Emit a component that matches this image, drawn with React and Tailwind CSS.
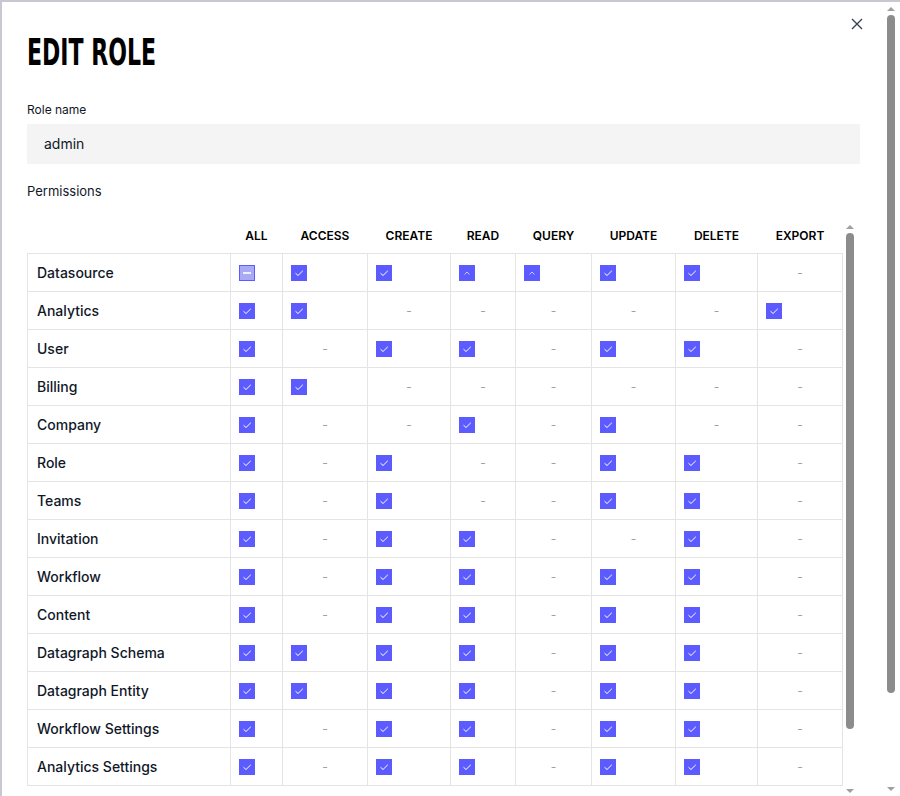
import React from "react";

const cols = ["ALL", "ACCESS", "CREATE", "READ", "QUERY", "UPDATE", "DELETE", "EXPORT"];
const widths = ["w-[203px]", "w-[52px]", "w-[85px]", "w-[83px]", "w-[65px]", "w-[76px]", "w-[84px]", "w-[82px]", "w-[85px]"];

// c = checked, - = none, i = indeterminate, u = partial (caret)
const rows = [
  ["Datasource", "iccuucc-"],
  ["Analytics", "cc-----c"],
  ["User", "c-cc-cc-"],
  ["Billing", "cc------"],
  ["Company", "c--c-c--"],
  ["Role", "c-c--cc-"],
  ["Teams", "c-c--cc-"],
  ["Invitation", "c-cc--c-"],
  ["Workflow", "c-cc-cc-"],
  ["Content", "c-cc-cc-"],
  ["Datagraph Schema", "cccc-cc-"],
  ["Datagraph Entity", "cccc-cc-"],
  ["Workflow Settings", "c-cc-cc-"],
  ["Analytics Settings", "c-cc-cc-"],
];

const Box = ({ t }) => {
  if (t === "-") return <span className="block text-center text-gray-400 text-xs">-</span>;
  if (t === "i")
    return (
      <span className="flex h-4 w-4 items-center justify-center border border-[#5b5bff] bg-[#a9a9f5]">
        <span className="h-[2px] w-2 bg-white/80" />
      </span>
    );
  return (
    <span className="flex h-4 w-4 items-center justify-center bg-[#5b5bff]">
      {t === "u" ? (
        <svg width="10" height="10" viewBox="0 0 10 10" fill="none" stroke="#c9c9ff" strokeWidth="1">
          <path d="M2.5 6.5 5 4l2.5 2.5" />
        </svg>
      ) : (
        <svg width="10" height="10" viewBox="0 0 10 10" fill="none" stroke="white" strokeWidth="1">
          <path d="M1.5 5.2 4 7.5 8.8 2.8" />
        </svg>
      )}
    </span>
  );
};

const Scrollbar = ({ className, thumb }) => (
  <div className={`flex flex-col items-center bg-white ${className}`}>
    <svg width="8" height="6" viewBox="0 0 8 6" className="mt-[4px]">
      <path d="M0 5 4 1l4 4z" fill="#a0a0a0" />
    </svg>
    <div className={`mt-[3px] w-[8px] rounded-full bg-[#8c8c8c] ${thumb}`} />
    <div className="flex-1" />
    <svg width="8" height="6" viewBox="0 0 8 6" className="mb-[4px]">
      <path d="M0 1 4 5l4-4z" fill="#a0a0a0" />
    </svg>
  </div>
);

export default function App() {
  return (
    <div className="flex h-[796px] w-[900px] overflow-hidden border-t-2 border-l-2 border-[#c8c8d0] bg-white" style={{ fontFamily: "Inter, sans-serif" }}>
      <div className="relative flex-1 pl-[25px] pr-[24px]">
        <button className="absolute right-[20px] top-[15px] text-gray-700">
          <svg width="14" height="14" viewBox="0 0 14 14" stroke="currentColor" strokeWidth="1.4">
            <path d="M2 2l10 10M12 2 2 12" />
          </svg>
        </button>
        <h1
          className="inline-block origin-left scale-x-[0.58] pt-[30px] text-[38px] font-black leading-[40px] text-black"
          style={{ fontFamily: "'DejaVu Sans', sans-serif" }}
        >
          EDIT ROLE
        </h1>
        <div className="mt-[30px] text-xs text-gray-900">Role name</div>
        <div className="mt-[6px] flex h-10 items-center bg-[#f4f4f4] px-[17px] text-sm text-gray-900">admin</div>
        <div className="mt-[18px] text-[13px] text-gray-900">Permissions</div>
        <div className="mt-[18px] flex h-[578px] overflow-hidden">
          <table className="h-fit border-collapse text-left">
            <thead>
              <tr className="h-[34px]">
                <th className={widths[0]} />
                {cols.map((c, i) => (
                  <th key={c} className={`${widths[i + 1]} text-center text-xs font-semibold text-black`}>
                    {c}
                  </th>
                ))}
              </tr>
            </thead>
            <tbody>
              {rows.map(([name, s]) => (
                <tr key={name} className="h-[38px]">
                  <td className="border border-[#e4e4e4] pl-[9px] text-sm font-medium text-gray-900">{name}</td>
                  {s.split("").map((t, i) => (
                    <td key={i} className="border border-[#e4e4e4] px-[8px]">
                      <Box t={t} />
                    </td>
                  ))}
                </tr>
              ))}
            </tbody>
          </table>
          <Scrollbar className="w-[14px]" thumb="h-[496px]" />
        </div>
      </div>
      <Scrollbar className="w-[14px] mr-[2px]" thumb="h-[678px]" />
    </div>
  );
}
